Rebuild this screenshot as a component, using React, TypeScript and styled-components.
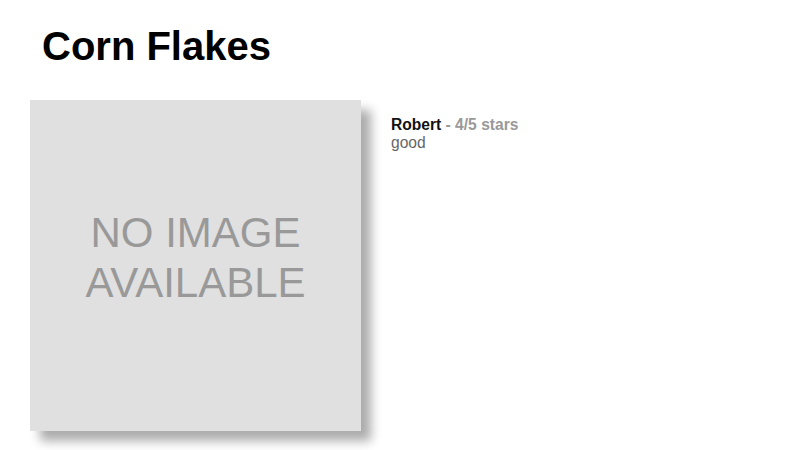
import React from 'react';
import styled, { createGlobalStyle } from 'styled-components';

const GlobalStyle = createGlobalStyle`
  body {
    margin: 0;
    background: #fff;
    font-family: 'Liberation Sans', Arial, sans-serif;
  }
`;

const Page = styled.div`
  min-height: 450px;
  box-sizing: border-box;
  padding: 23px 30px 19px 30px;
`;

const Title = styled.h1`
  font-size: 40px;
  font-weight: 700;
  color: #000;
  margin: 0 0 31px 12px;
  line-height: 46px;
`;

const Content = styled.div`
  display: flex;
  align-items: flex-start;
  gap: 30px;
`;

const NoImage = styled.div`
  width: 331px;
  height: 331px;
  box-sizing: border-box;
  padding-bottom: 16px;
  background: #e0e0e0;
  box-shadow: 10px 10px 10px rgba(0, 0, 0, 0.33);
  display: flex;
  flex-direction: column;
  align-items: center;
  justify-content: center;
  color: #999;
  font-size: 42px;
  line-height: 50px;
  text-align: center;
  flex-shrink: 0;
`;

const Review = styled.div`
  padding-top: 16px;
  font-size: 15.6px;
  line-height: 18px;
`;

const Author = styled.span`
  font-weight: 700;
  color: #111;
`;

const Stars = styled.span`
  font-weight: 700;
  color: #999;
`;

const Comment = styled.div`
  color: #666;
`;

const App: React.FC = () => (
  <>
    <GlobalStyle />
    <Page>
      <Title>Corn Flakes</Title>
      <Content>
        <NoImage>
          <span>NO IMAGE</span>
          <span>AVAILABLE</span>
        </NoImage>
        <Review>
          <div>
            <Author>Robert</Author> <Stars>- 4/5 stars</Stars>
          </div>
          <Comment>good</Comment>
        </Review>
      </Content>
    </Page>
  </>
);

export default App;
